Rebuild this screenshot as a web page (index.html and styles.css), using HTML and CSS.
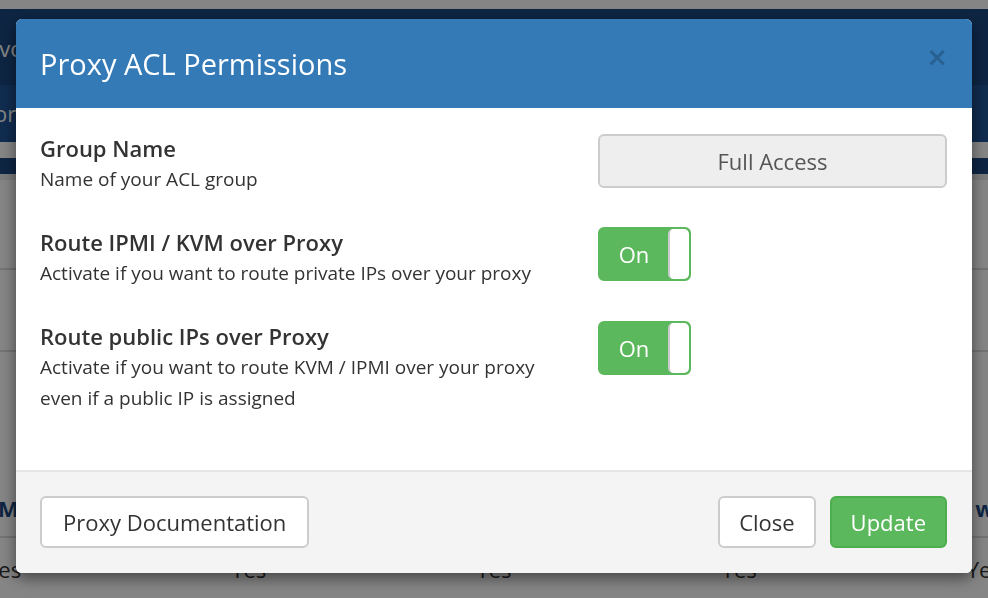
FILE: index.html
```html
<!DOCTYPE html>
<html lang="en">
    <head>
        <meta charset="UTF-8">
        <meta name="viewport" content="width=device-width, initial-scale=1.0">
        <title>Proxy ACL Permissions</title>
        <link rel="stylesheet" href="styles.css">
    </head>
    <body>
        <div class="page">
            <div class="topbar"></div>
            <div class="navbar">
                <span class="nav-text nav-one">Devops</span>
            </div>
            <div class="subnav">
                <span class="nav-text nav-two">Monitoring</span>
            </div>
            <div class="strip"></div>
            <div class="tabs"></div>
            <div class="list">
                <div class="list-row tall"></div>
                <div class="list-row mid"></div>
                <div class="list-row head">
                    <span class="cell-left">MAC</span>
                    <span class="cell-right">w</span>
                </div>
                <div class="list-row yes">
                    <span>Yes</span>
                    <span>Yes</span>
                    <span>Yes</span>
                    <span>Yes</span>
                    <span>Yes</span>
                </div>
            </div>
        </div>

        <div class="backdrop"></div>

        <div class="modal">
            <div class="modal-header">
                <h4 class="modal-title">Proxy ACL Permissions</h4>
                <button class="close">&times;</button>
            </div>
            <div class="modal-body">
                <div class="perm-row">
                    <div>
                        <div class="perm-label">Group Name</div>
                        <div class="perm-desc">Name of your ACL group</div>
                    </div>
                    <input class="group-input" type="text" value="Full Access" readonly>
                </div>
                <div class="perm-row">
                    <div>
                        <div class="perm-label">Route IPMI / KVM over Proxy</div>
                        <div class="perm-desc">Activate if you want to route private IPs over your proxy</div>
                    </div>
                    <div class="toggle">
                        <span class="toggle-on">On</span>
                        <span class="toggle-handle"></span>
                    </div>
                </div>
                <div class="perm-row">
                    <div>
                        <div class="perm-label">Route public IPs over Proxy</div>
                        <div class="perm-desc">Activate if you want to route KVM / IPMI over your proxy even if a public IP is assigned</div>
                    </div>
                    <div class="toggle">
                        <span class="toggle-on">On</span>
                        <span class="toggle-handle"></span>
                    </div>
                </div>
            </div>
            <div class="modal-footer">
                <button class="btn btn-wide">Proxy Documentation</button>
                <div class="footer-right">
                    <button class="btn">Close</button>
                    <button class="btn btn-success">Update</button>
                </div>
            </div>
        </div>
    </body>
</html>
```

FILE: styles.css
```css
html, body {
    margin: 0;
    height: 100%;
    overflow: hidden;
}
body {
    font-family: "Open Sans", "DejaVu Sans", sans-serif;
    color: #333;
    background: #fff;
}

/* page behind the dialog */
.topbar {
    height: 9px;
    background: #fff;
}
.navbar {
    height: 76px;
    background: #1a4780;
    overflow: hidden;
}
.subnav {
    height: 57px;
    background: #1f5498;
    overflow: hidden;
}
.nav-text {
    display: block;
    font-size: 22px;
    color: #fff;
    white-space: nowrap;
}
.nav-one {
    margin: 24px 0 0 -29px;
}
.nav-two {
    margin: 13px 0 0 -66px;
}
.strip {
    height: 16px;
    background: #fff;
}
.tabs {
    height: 16px;
    background: #1a4780;
    border-bottom: 6px solid #ececec;
}
.list {
    background: #fff;
}
.list-row {
    border-bottom: 2px solid #dcdcdc;
    display: flex;
    align-items: center;
    justify-content: space-between;
    white-space: nowrap;
    overflow: hidden;
}
.tall {
    height: 88px;
}
.mid {
    height: 80px;
}
.head {
    height: 184px;
    align-items: flex-end;
}
.head span {
    font-size: 22px;
    font-weight: 700;
    color: #1a4780;
    line-height: 56px;
}
.cell-left {
    margin-left: -2px;
}
.cell-right {
    margin-right: -6px;
}
.yes {
    height: 60px;
    align-items: flex-start;
    padding-top: 16px;
    margin: 0 -14px;
}
.yes span {
    font-size: 22px;
    color: #333;
}

.backdrop {
    position: fixed;
    inset: 0;
    background: rgba(0, 0, 0, 0.48);
}

/* dialog */
.modal {
    position: fixed;
    top: 19px;
    left: 16px;
    width: 956px;
    background: #fff;
    border-radius: 6px;
    box-shadow: 0 5px 15px rgba(0, 0, 0, 0.5);
    overflow: hidden;
}
.modal-header {
    height: 89px;
    background: #337ab7;
    display: flex;
    align-items: center;
    justify-content: space-between;
    padding: 0 24px;
    box-sizing: border-box;
}
.modal-title {
    margin: 0;
    font-size: 29px;
    font-weight: 400;
    color: #fff;
}
.close {
    border: 0;
    background: none;
    padding: 0;
    margin-top: -14px;
    font-family: "DejaVu Sans", sans-serif;
    font-size: 26px;
    font-weight: 700;
    color: #000;
    opacity: 0.2;
}
.modal-body {
    padding: 24px 25px 25px 24px;
    display: flex;
    flex-direction: column;
    gap: 31px;
    min-height: 313px;
}
.perm-row {
    display: grid;
    grid-template-columns: 1fr 349px;
    align-items: start;
}
.perm-label {
    font-size: 22px;
    font-weight: 600;
    line-height: 32px;
}
.perm-desc {
    font-size: 19px;
    line-height: 31px;
    max-width: 520px;
}
.group-input {
    box-sizing: border-box;
    width: 349px;
    height: 54px;
    margin-top: 2px;
    border: 2px solid #ccc;
    border-radius: 6px;
    background: #eee;
    font-family: inherit;
    font-size: 22px;
    color: #555;
    text-align: center;
}
.toggle {
    box-sizing: border-box;
    width: 93px;
    height: 54px;
    margin-top: 1px;
    display: flex;
    border: 2px solid #5cb85c;
    border-radius: 6px;
    background: #5cb85c;
}
.toggle-on {
    flex: 1;
    display: flex;
    align-items: center;
    justify-content: center;
    font-size: 22px;
    color: #fff;
}
.toggle-handle {
    width: 19px;
    background: #fff;
    border-left: 2px solid #ccc;
    border-radius: 5px;
}
.modal-footer {
    border-top: 2px solid #e5e5e5;
    background: #f4f4f4;
    padding: 24px 25px 25px 24px;
    display: flex;
    justify-content: space-between;
}
.footer-right {
    display: flex;
    gap: 14px;
}
.btn {
    height: 52px;
    padding: 0 19px;
    border: 2px solid #ccc;
    border-radius: 6px;
    background: #fff;
    font-family: inherit;
    font-size: 22px;
    color: #333;
}
.btn-wide {
    padding: 0 21px;
}
.btn-success {
    background: #5cb85c;
    border-color: #4cae4c;
    color: #fff;
}
```
